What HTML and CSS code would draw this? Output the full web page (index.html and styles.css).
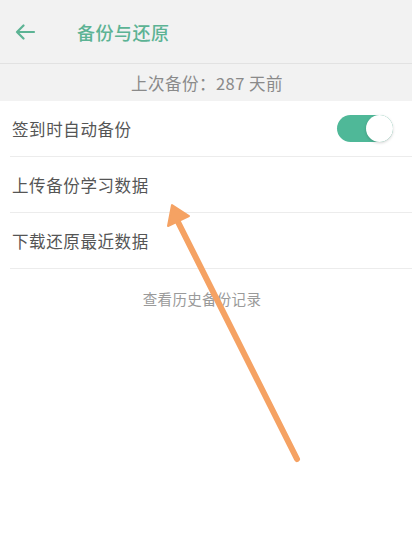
FILE: index.html
```html
<!DOCTYPE html>
<html lang="zh">
<head>
<meta charset="utf-8">
<link rel="stylesheet" href="styles.css">
</head>
<body>
<div class="page">
  <header class="topbar">
    <svg class="back" width="22" height="16" viewBox="0 0 22 16">
      <path d="M20 8 H3 M9.5 1.5 L3 8 L9.5 14.5" fill="none" stroke="#5cb394" stroke-width="2.2" stroke-linecap="round" stroke-linejoin="round"/>
    </svg>
    <div class="title">备份与还原</div>
  </header>
  <div class="band">上次备份：287 天前</div>
  <div class="list">
    <div class="row">
      <span class="label">签到时自动备份</span>
      <span class="toggle"><span class="knob"></span></span>
    </div>
    <div class="row"><span class="label">上传备份学习数据</span></div>
    <div class="row"><span class="label">下载还原最近数据</span></div>
  </div>
  <div class="history">查看历史备份记录</div>
  <svg class="pointer" width="412" height="553" viewBox="0 0 412 553">
    <line x1="297" y1="459" x2="176" y2="218" stroke="#f5a263" stroke-width="6" stroke-linecap="round"/>
    <polygon points="172,205 168,226 189,216" fill="#f5a263" stroke="#f5a263" stroke-width="2" stroke-linejoin="round"/>
  </svg>
</div>
</body>
</html>
```
FILE: styles.css
```css
* { box-sizing: border-box; }
html, body { margin: 0; padding: 0; }
body {
  width: 412px;
  height: 553px;
  background: #ffffff;
  font-family: "Noto Sans CJK SC", "Noto Sans", sans-serif;
  overflow: hidden;
}
.page {
  position: relative;
  width: 412px;
  height: 553px;
}
.topbar {
  height: 64px;
  background: #f2f2f2;
  border-bottom: 1px solid #e2e2e2;
  display: flex;
  align-items: center;
  padding-left: 14px;
}
.back { display: block; margin-top: 1px; }
.title {
  margin-left: 41px;
  font-size: 18px;
  color: #5cb394;
  font-weight: 500;
  letter-spacing: 0.5px;
}
.band {
  height: 37px;
  background: #f2f2f2;
  display: flex;
  align-items: center;
  justify-content: center;
  font-size: 16.5px;
  color: #8a8a8a;
  padding-left: 2px;
  letter-spacing: 0.5px;
}
.list { background: #fff; }
.row {
  height: 56px;
  margin-left: 10px;
  border-bottom: 1px solid #ececec;
  display: flex;
  align-items: center;
  justify-content: space-between;
  padding-left: 2px;
  padding-right: 19px;
}
.label {
  font-size: 16.5px;
  color: #555555;
  letter-spacing: 0.6px;
}
.toggle {
  position: relative;
  width: 56px;
  height: 27px;
  border-radius: 14px;
  background: #4fb898;
  display: flex;
  justify-content: flex-end;
}
.knob {
  width: 27px;
  height: 27px;
  border-radius: 50%;
  background: #fff;
  box-shadow: 0 1px 3px rgba(0,0,0,0.18);
}
.history {
  text-align: center;
  font-size: 14.5px;
  color: #9a9a9a;
  margin-top: 19px;
  padding-right: 8px;
  letter-spacing: 0.3px;
}
.pointer {
  position: absolute;
  left: 0;
  top: 0;
  pointer-events: none;
}
```
